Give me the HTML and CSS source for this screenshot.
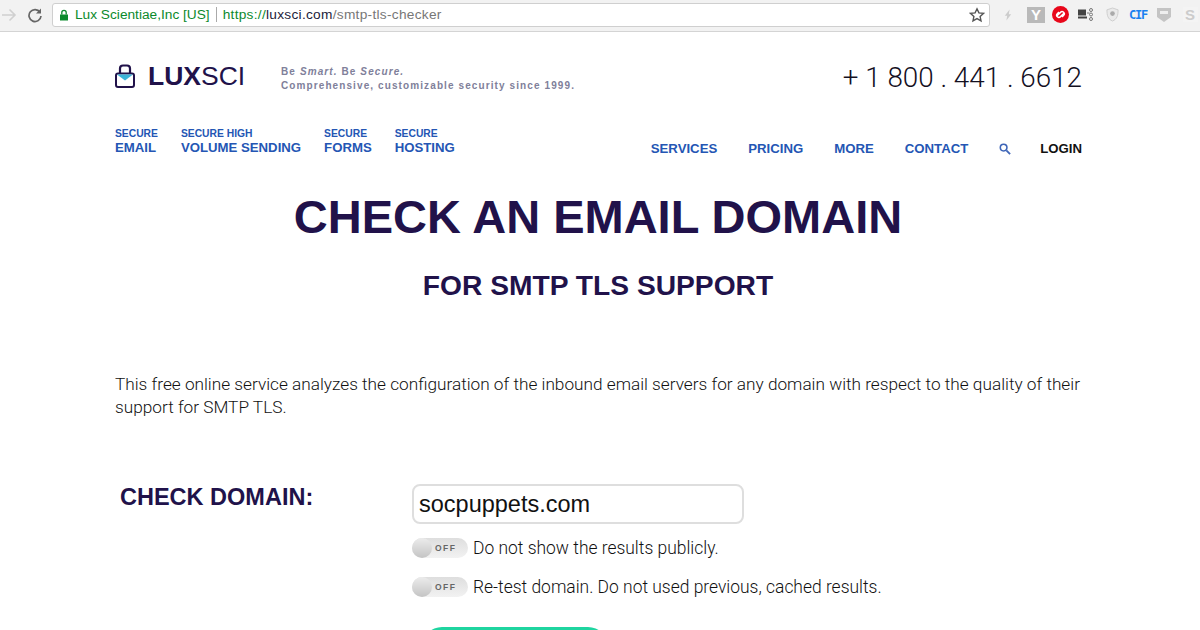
FILE: index.html
```html
<!DOCTYPE html>
<html lang="en">
<head>
<meta charset="utf-8">
<title>SMTP TLS Checker</title>
<link rel="stylesheet" href="styles.css">
</head>
<body>
<div class="chrome">
  <svg class="nav-ic fwd" width="16" height="14" viewBox="0 0 16 14"><path d="M1 7h13M8.500 1.500 14 7l-5.500 5.500" fill="none" stroke="#d0d0d0" stroke-width="1.600"/></svg>
  <svg class="nav-ic reload" width="16" height="16" viewBox="0 0 16 16"><path d="M13 5.200A6 6 0 1 0 14 9" fill="none" stroke="#666" stroke-width="1.700"/><path d="M14 1.500V6.500H9z" fill="#666"/></svg>
  <div class="omnibox">
    <svg class="lock" width="10" height="12" viewBox="0 0 10 12"><path d="M1 5.500h8v6H1z" fill="#0b8a2c"/><path d="M2.800 5.500V3.500a2.200 2.200 0 0 1 4.400 0v2" fill="none" stroke="#0b8a2c" stroke-width="1.300"/></svg>
    <span class="ev">Lux Scientiae,Inc [US]</span>
    <span class="sep"></span>
    <span class="url"><span class="https">https://</span><span class="host">luxsci.com</span>/smtp-tls-checker</span>
    <svg class="star" width="16" height="16" viewBox="0 0 16 16"><path d="m8 1.800 1.900 4.100 4.500.5-3.300 3 .9 4.400L8 11.600l-4 2.200.9-4.400-3.300-3 4.500-.5z" fill="none" stroke="#555" stroke-width="1.400"/></svg>
  </div>
  <div class="exts">
    <span class="slot"><svg width="8" height="14" viewBox="0 0 10 14"><path d="M7 0 1 8h3l-1 6 6-8H6z" fill="#ccc"/></svg></span>
    <span class="slot"><span class="ext-y">Y</span></span>
    <span class="slot"><svg width="17" height="17" viewBox="0 0 16 16"><circle cx="8" cy="8" r="8" fill="#e8071a"/><path d="M4.500 9.500 8 6a2 2 0 0 1 3 2.800L9.500 10.300M11.500 6.500 8 10A2 2 0 0 1 5 7.200L6.500 5.700" fill="none" stroke="#fff" stroke-width="1.400"/></svg></span>
    <span class="slot"><svg width="16" height="13" viewBox="0 0 16 13"><path d="M0 1.500h8v6H0zM0 8.500h9v2H0z" fill="#444"/><circle cx="13" cy="2" r="1.500" fill="none" stroke="#777"/><circle cx="13" cy="6.500" r="1.500" fill="none" stroke="#777"/><circle cx="13" cy="11" r="1.500" fill="none" stroke="#777"/><path d="M9 5h2.500" stroke="#777"/></svg></span>
    <span class="slot"><svg width="13" height="15" viewBox="0 0 14 16"><path d="M7 1 13 3c0 6-1 10-6 12C2 13 1 9 1 3z" fill="#eaeaea" stroke="#ccc"/><circle cx="7" cy="7" r="2.500" fill="#aaa"/></svg></span>
    <span class="slot"><span class="ext-cif">CIF</span></span>
    <span class="slot"><svg width="14" height="16" viewBox="0 0 14 16"><path d="M0 1h14v9l-7 5-7-5z" fill="#c4c4c4"/><path d="M3 4h8v3H3z" fill="#eee"/></svg></span>
    <span class="slot"><span class="ext-s">S</span></span>
  </div>
</div>

<div class="page">
  <header class="brand-row">
    <div class="logo">
      <svg width="20" height="24" viewBox="0 0 20 24"><path d="M5 10V4.500a3 3 0 0 1 3-3h4a3 3 0 0 1 3 3V10" fill="none" stroke="#21124a" stroke-width="2.200"/><rect x="1" y="9.500" width="18" height="13.500" rx="2" fill="#fff" stroke="#21124a" stroke-width="2"/><path d="M2 10.500h16l-8 6z" fill="#3cb4d8"/></svg>
      <span class="wordmark"><b>LUX</b>SCI</span>
    </div>
    <p class="tagline">Be <em>Smart.</em> Be <em>Secure.</em><br>Comprehensive, customizable security since 1999.</p>
    <div class="phone">+ 1 800 . 441 . 6612</div>
  </header>

  <nav class="menu">
    <div class="menu-left">
      <a class="item"><small>SECURE</small>EMAIL</a>
      <a class="item"><small>SECURE HIGH</small>VOLUME SENDING</a>
      <a class="item"><small>SECURE</small>FORMS</a>
      <a class="item"><small>SECURE</small>HOSTING</a>
    </div>
    <div class="menu-right">
      <a>SERVICES</a>
      <a>PRICING</a>
      <a>MORE</a>
      <a>CONTACT</a>
      <svg width="12" height="12" viewBox="0 0 13 13"><circle cx="5" cy="5" r="3.600" fill="none" stroke="#3f66b8" stroke-width="1.700"/><path d="m8 8 4 4" stroke="#3f66b8" stroke-width="2"/></svg>
      <a class="login">LOGIN</a>
    </div>
  </nav>

  <h1>CHECK AN EMAIL DOMAIN</h1>
  <h2>FOR SMTP TLS SUPPORT</h2>

  <p class="intro">This free online service analyzes the configuration of the inbound email servers for any domain with respect to the quality of their support for SMTP TLS.</p>

  <form class="check">
    <h3>CHECK DOMAIN:</h3>
    <div class="fields">
      <div class="domain">socpuppets.com</div>
      <div class="opt"><span class="toggle"><i></i><span>OFF</span></span>Do not show the results publicly.</div>
      <div class="opt"><span class="toggle"><i></i><span>OFF</span></span>Re-test domain. Do not used previous, cached results.</div>
      <div class="submit"></div>
    </div>
  </form>
</div>
</body>
</html>
```
FILE: styles.css
```css
html, body { margin: 0; height: 630px; overflow: hidden; background: #fff; }
body { font-family: "Liberation Sans", Arial, sans-serif; color: #21124a; }

.chrome { height: 32px; box-sizing: border-box; background: #f2f2f2; border-bottom: 1px solid #d4d4d4; display: flex; align-items: center; }
.nav-ic { flex: none; }
.fwd { margin-left: 1px; margin-top: -1px; }
.reload { margin-left: 10px; margin-top: -2px; }
.omnibox { margin-left: 9px; margin-top: -2px; width: 938px; height: 24px; box-sizing: border-box; flex: none; background: #fff; border: 1px solid #cfcfcf; border-radius: 3px; display: flex; align-items: center; font-size: 13.700px; padding-left: 6px; }
.lock { flex: none; }
.ev { color: #0b8a2c; margin-left: 6px; }
.sep { width: 1px; height: 15px; background: #aaa; margin: 0 6px; }
.url { color: #777; letter-spacing: .28px; }
.https { color: #0b8a2c; }
.host { color: #21213a; }
.star { margin-left: auto; margin-right: 4px; }
.exts { margin-top: -2px; margin-left: 5px; display: flex; align-items: center; }
.slot { width: 26px; height: 20px; display: flex; align-items: center; justify-content: center; flex: none; }
.ext-y { flex: none; width: 18px; height: 16px; margin-left: 4px; background: #b9b9b9; color: #fff; font: bold 15px/16px "Liberation Sans", sans-serif; text-align: center; }
.ext-cif { color: #1a80f0; font: bold 12px/16px "DejaVu Sans Mono", monospace; letter-spacing: -1.200px; }
.ext-s { width: 15px; height: 15px; background: #f4f4f4; color: #ccc; font: bold 15px/15px "Liberation Sans", sans-serif; text-align: center; }

.page { width: 968px; height: 598px; overflow: hidden; margin-left: 115px; }

.brand-row { display: flex; align-items: flex-start; height: 84px; padding-top: 27px; box-sizing: border-box; }
.logo { display: flex; align-items: center; gap: 13px; width: 166px; height: 34px; }
.wordmark { font-size: 26.500px; color: #21124a; line-height: 30px; }
.wordmark b { font-weight: 700; }
.tagline { margin: 6px 0 0; font-size: 10px; line-height: 14px; font-weight: 700; letter-spacing: 1.100px; color: #80809a; }
.tagline em { font-style: italic; }
.phone { margin-left: auto; font-family: Roboto, "Liberation Sans", sans-serif; font-weight: 300; font-size: 27.800px; line-height: 34px; color: #14101f; margin-top: 2px; margin-right: 1px; }

.menu { display: flex; justify-content: space-between; align-items: flex-end; height: 39px; color: #2456b4; font-weight: 700; }
.menu a { display: block; }
.menu-left { display: flex; gap: 23px; font-size: 13.200px; line-height: 15px; }
.item small { display: block; font-size: 10.300px; line-height: 13px; }
.menu-right { display: flex; align-items: center; gap: 31px; font-size: 13.200px; line-height: 15px; margin-right: 1px; margin-bottom: -1px; }
.menu-right a.login { color: #111; margin-left: -2px; }

h1 { margin: 34px 0 0; padding-right: 2px; font-size: 47px; line-height: 56px; text-align: center; color: #21124a; }
h2 { margin: 23px 0 0; padding-right: 2px; font-size: 28.200px; line-height: 34px; text-align: center; color: #21124a; }

.intro { margin: 71px 0 0; font-family: Roboto, "Liberation Sans", sans-serif; font-weight: 300; font-size: 17.230px; line-height: 23px; color: #111; }

.check { display: flex; margin-top: 65px; }
.check h3 { margin: 0 0 0 5px; width: 292px; font-size: 23.500px; line-height: 27px; color: #21124a; }
.fields { flex: 1; }
.domain { width: 332px; height: 40px; box-sizing: border-box; border: 2px solid #dedede; border-radius: 8px; padding: 0 5px; font-size: 23.500px; line-height: 37px; color: #111; }
.opt { display: flex; align-items: center; height: 20px; margin-top: 14px; font-family: Roboto, "Liberation Sans", sans-serif; font-weight: 300; font-size: 17.450px; color: #111; }
.opt + .opt { margin-top: 19px; }
.toggle { position: relative; width: 56px; height: 20px; border-radius: 10px; background: linear-gradient(#dedede, #f2f2f2); margin-right: 5px; flex: none; }
.toggle i { position: absolute; left: 0; top: 0; width: 20px; height: 20px; border-radius: 50%; background: linear-gradient(#ececec, #c4c4c4); }
.toggle span { position: absolute; left: 23px; top: 0; font-family: "Liberation Sans", sans-serif; font-size: 8.500px; line-height: 20px; font-weight: 700; letter-spacing: 1.500px; color: #666; }
.submit { width: 186px; height: 40px; margin: 30px 0 0 10px; border-radius: 20px; background: #1fd5a0; }
```
